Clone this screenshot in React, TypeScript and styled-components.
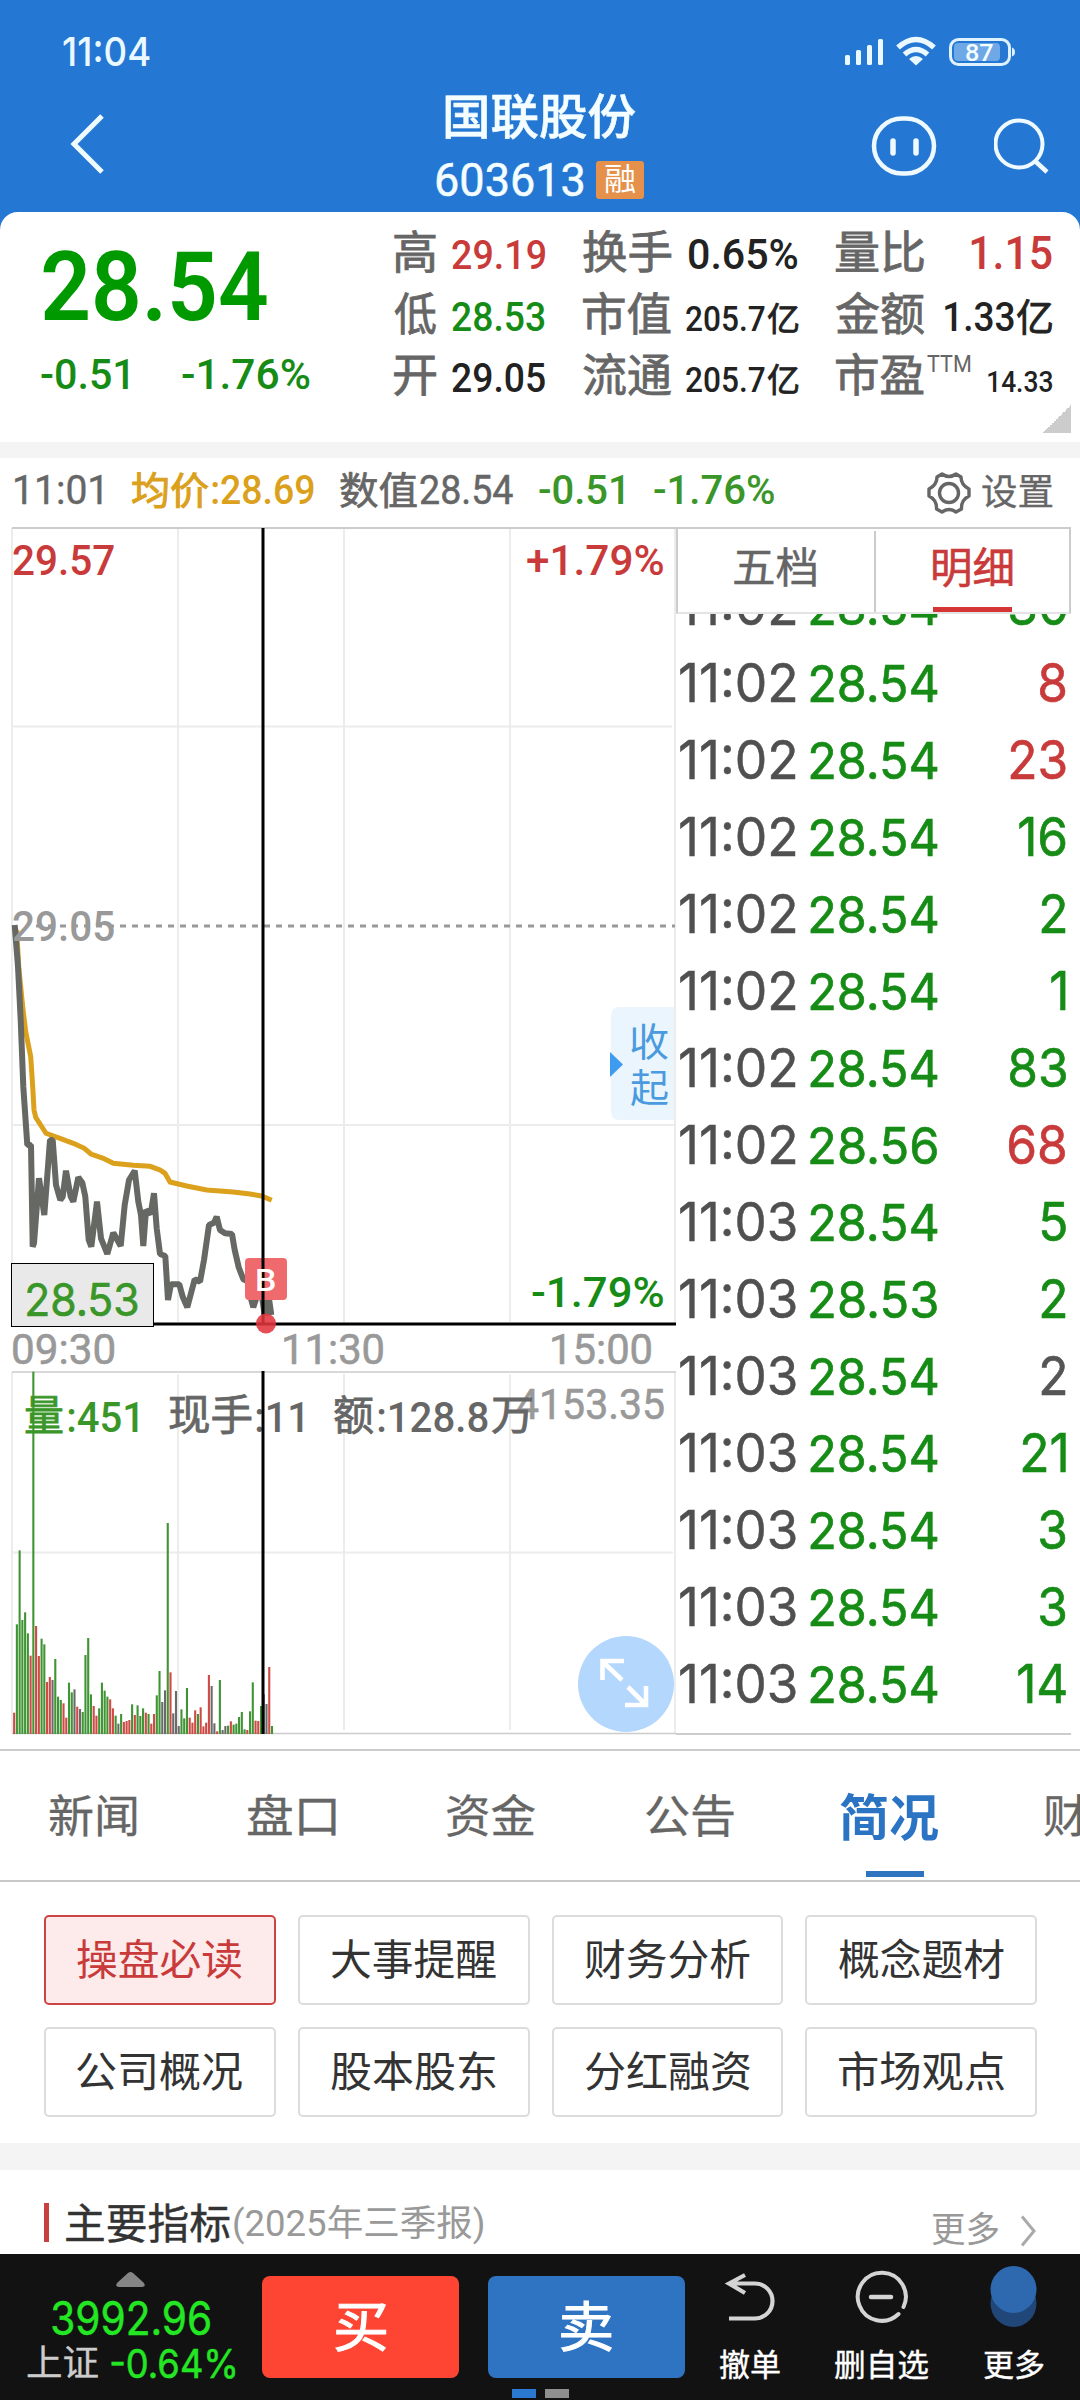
import React from 'react';
import styled, { createGlobalStyle } from 'styled-components';

const SANS = `Roboto, "Noto Sans CJK SC", sans-serif`;
const ROUND = `Inter, "Noto Sans CJK SC", sans-serif`;

const C = {
  blue: '#2577d4',
  green: '#168c16',
  leaf: '#3a9628',
  red: '#c93a3a',
  gold: '#dba01c',
  grey: '#666',
  light: '#999',
  ink: '#222',
};

const Global = createGlobalStyle`
  * { box-sizing: border-box; }
  body { margin: 0; background: #fff; font-family: ${SANS}; }
`;

/* ---------- text whose drawn width is fixed ---------- */

const ctx = document.createElement('canvas').getContext('2d')!;

function measure(text: string, size: number, weight: number, family: string) {
  ctx.font = `${weight} ${size}px ${family}`;
  const m = ctx.measureText(text);
  return { left: m.actualBoundingBoxLeft, width: m.actualBoundingBoxLeft + m.actualBoundingBoxRight };
}

const Slot = styled.span<{ $w: number; $size: number; $lh: number; $weight: number; $family: string; $color?: string; $ml: number; $stroke: number }>`
  display: block;
  flex: none;
  width: ${p => p.$w}px;
  margin-left: ${p => p.$ml}px;
  font-family: ${p => p.$family};
  font-size: ${p => p.$size}px;
  font-weight: ${p => p.$weight};
  line-height: ${p => p.$lh}px;
  color: ${p => p.$color || 'inherit'};
  white-space: nowrap;
  -webkit-text-stroke: ${p => p.$stroke}px currentColor;
`;

const Glyphs = styled.span`
  display: inline-block;
  transform-origin: left center;
`;

interface FitProps {
  t: string; size: number; w?: number; k?: number; weight?: number;
  family?: string; color?: string; lh?: number; ml?: number; stroke?: number;
}

function Fit({ t, size, w, k = 1, weight = 400, family = SANS, color, lh = size, ml = 0, stroke = 0 }: FitProps) {
  const m = measure(t, size, weight, family);
  const width = w ?? m.width * k;
  return (
    <Slot $w={width} $size={size} $lh={lh} $weight={weight} $family={family} $color={color} $ml={ml} $stroke={stroke}>
      <Glyphs style={{ transform: `scaleX(${width / m.width}) translateX(${m.left}px)` }}>{t}</Glyphs>
    </Slot>
  );
}

const SvgText = styled.text<{ $size: number; $weight: number; $family: string }>`
  font-family: ${p => p.$family};
  font-size: ${p => p.$size}px;
  font-weight: ${p => p.$weight};
  white-space: pre;
`;

interface LabelProps {
  t: string; x: number; y: number; w: number; size: number; fill: string; weight?: number; family?: string; stroke?: number;
}

function Label({ t, x, y, w, size, fill, weight = 500, family = SANS, stroke = 0 }: LabelProps) {
  const m = measure(t, size, weight, family);
  const s = w / m.width;
  return (
    <SvgText $size={size} $weight={weight} $family={family} fill={fill} stroke={fill} strokeWidth={stroke}
      transform={`translate(${x + m.left * s} ${y}) scale(${s} 1)`}>{t}</SvgText>
  );
}

/* ---------- header ---------- */

const Screen = styled.div`
  width: 1080px;
  height: 2400px;
  overflow: hidden;
  display: flex;
  flex-direction: column;
  background: ${C.blue};
`;

const StatusBar = styled.div`
  flex: none;
  height: 88px;
  padding: 16px 65px 0 63px;
  display: flex;
  align-items: center;
  justify-content: space-between;
  color: #eaf8ff;
`;

const Nav = styled.div`
  flex: none;
  height: 124px;
  display: flex;
`;

const NavBack = styled.div`
  width: 436px;
  padding: 26px 0 0 70px;
`;

const TitleColumn = styled.div`
  width: 208px;
  display: flex;
  flex-direction: column;
  align-items: center;
  color: #f4fdff;
`;

const CodeRow = styled.div`
  display: flex;
  align-items: center;
  gap: 13px;
  height: 71px;
`;

const MarginBadge = styled.div`
  width: 48px;
  height: 38px;
  border-radius: 3px;
  background: #e5914c;
  display: flex;
  align-items: center;
  justify-content: center;
`;

const NavActions = styled.div`
  flex: 1;
  display: flex;
  gap: 57px;
  padding: 27px 0 0 227px;
`;

function Header() {
  return (
    <>
      <StatusBar>
        <Fit t="11:04" size={40} w={87} weight={500} family={ROUND} />
        <svg width="172" height="32" viewBox="0 0 172 32">
          <g fill="#eaf8ff">
            <rect x="2" y="19" width="5" height="10" rx="1.5" />
            <rect x="13" y="14" width="5" height="15" rx="1.5" />
            <rect x="24" y="9" width="5" height="20" rx="1.5" />
            <rect x="35" y="3" width="5" height="26" rx="1.5" />
          </g>
          <g fill="none" stroke="#eaf8ff" strokeWidth="5.500">
            <path d="M55 11.5 Q73 -4.5 91 11.5" />
            <path d="M61.500 18.500 Q73 8.500 84.500 18.500" />
          </g>
          <path d="M66 23 Q73 17 80 23 L73 29.500 Z" fill="#eaf8ff" />
          <rect x="107.500" y="3.500" width="59" height="25" rx="8" fill="none" stroke="#dff2ff" strokeWidth="3" />
          <rect x="111" y="7" width="46" height="18" rx="4" fill="#6fa8e6" />
          <path d="M169 11.500 q3 1 3 4.500 q0 3.500 -3 4.500 Z" fill="#dff2ff" />
          <Label t="87" x={123} y={24.500} w={27} size={24} fill="#f4fdff" weight={500} />
        </svg>
      </StatusBar>
      <Nav>
        <NavBack>
          <svg width="36" height="60" viewBox="0 0 36 60" fill="none" stroke="#f0fbff" strokeWidth="5">
            <path d="M32 2 L4 30 L32 58" />
          </svg>
        </NavBack>
        <TitleColumn>
          <Fit t="国联股份" size={48} w={190} lh={60} weight={500} stroke={0.6} />
          <CodeRow>
            <Fit t="603613" size={46} w={147} lh={60} stroke={0.5} />
            <MarginBadge>
              <Fit t="融" size={31} w={30} lh={36} color="#fff" />
            </MarginBadge>
          </CodeRow>
        </TitleColumn>
        <NavActions>
          <svg width="66" height="62" viewBox="0 0 66 62" fill="none" stroke="#eefaff">
            <rect x="3" y="3.500" width="60" height="55" rx="28" strokeWidth="4.500" />
            <path d="M22 26 V38 M45 26 V38" strokeWidth="5.500" strokeLinecap="round" />
          </svg>
          <svg width="60" height="62" viewBox="0 0 60 62" fill="none" stroke="#eefaff" strokeWidth="4">
            <circle cx="25" cy="29" r="23.500" />
            <path d="M41 46 L53 57" strokeWidth="4.500" />
          </svg>
        </NavActions>
      </Nav>
    </>
  );
}

/* ---------- quote card ---------- */

const Sheet = styled.main`
  flex: 1;
  min-height: 0;
  display: flex;
  flex-direction: column;
  background: #fff;
  border-radius: 18px 18px 0 0;
`;

const Quote = styled.section`
  flex: none;
  height: 230px;
  display: flex;
  position: relative;
`;

const PriceColumn = styled.div`
  width: 394px;
  padding: 13px 0 0 41px;
`;

const ChangeRow = styled.div`
  display: flex;
  gap: 54px;
  margin-top: 11px;
`;

const StatGrid = styled.div`
  display: grid;
  grid-template-columns: 151px 215px 216px;
  grid-auto-rows: 61.5px;
  column-gap: 38px;
  padding-top: 12px;
`;

const Stat = styled.div`
  display: flex;
  align-items: baseline;
`;

const StatValue = styled.div`
  margin-left: auto;
  display: flex;
  align-items: baseline;
`;

const Superscript = styled.div`
  align-self: flex-start;
  padding: 3px 0 0 3px;
`;

const FoldCorner = styled.div`
  position: absolute;
  right: 9px;
  bottom: 9px;
  width: 28px;
  height: 28px;
  background: linear-gradient(135deg, transparent 50%, #ccc 50%);
`;

const Band = styled.div<{ $h: number }>`
  flex: none;
  height: ${p => p.$h}px;
  background: #f4f4f4;
`;

interface StatData { label: string; lw: number; value: string; vw: number; size: number; color?: string; unit?: string; us?: number; sup?: string }

const stats: StatData[] = [
  { label: '高', lw: 42, value: '29.19', vw: 93, size: 41, color: C.red },
  { label: '换手', lw: 88, value: '0.65%', vw: 109, size: 42, color: C.ink },
  { label: '量比', lw: 88, value: '1.15', vw: 81, size: 46, color: C.red },
  { label: '低', lw: 42, value: '28.53', vw: 93, size: 41, color: C.green },
  { label: '市值', lw: 88, value: '205.7', vw: 79, size: 35, color: C.ink, unit: '亿', us: 33 },
  { label: '金额', lw: 88, value: '1.33', vw: 69, size: 40, color: C.ink, unit: '亿', us: 38 },
  { label: '开', lw: 42, value: '29.05', vw: 93, size: 41, color: C.ink },
  { label: '流通', lw: 88, value: '205.7', vw: 79, size: 35, color: C.ink, unit: '亿', us: 33 },
  { label: '市盈', lw: 88, value: '14.33', vw: 64, size: 29, color: C.ink, sup: 'TTM' },
];

function QuoteCard() {
  return (
    <Quote>
      <PriceColumn>
        <Fit t="28.54" size={96} w={224} ml={2} lh={124} weight={600} color="#009a00" />
        <ChangeRow>
          <Fit t="-0.51" size={42} w={87} lh={30} weight={500} color={C.green} />
          <Fit t="-1.76%" size={42} w={128} lh={30} weight={500} color={C.green} />
        </ChangeRow>
      </PriceColumn>
      <StatGrid>
        {stats.map(s => (
          <Stat key={s.label}>
            <Fit t={s.label} size={45} w={s.lw} lh={60} color={C.grey} stroke={0.8} />
            {s.sup && <Superscript><Fit t={s.sup} size={24} w={43} lh={28} color={C.grey} /></Superscript>}
            <StatValue>
              <Fit t={s.value} size={s.size} w={s.vw} weight={500} color={s.color} />
              {s.unit && <Fit t={s.unit} size={s.us!} lh={40} ml={3} w={s.us! - 3} color={s.color} stroke={0.8} />}
            </StatValue>
          </Stat>
        ))}
      </StatGrid>
      <FoldCorner />
    </Quote>
  );
}

/* ---------- chart ---------- */

const InfoBar = styled.div`
  flex: none;
  height: 69px;
  padding: 0 27px 4px 15px;
  display: flex;
  align-items: center;
  color: ${C.grey};
`;

const Settings = styled.div`
  margin-left: auto;
  display: flex;
  align-items: center;
  gap: 11px;
  padding-top: 4px;
`;

const MarketRow = styled.section`
  flex: none;
  height: 1222px;
  display: flex;
`;

const ChartColumn = styled.div`
  width: 676px;
  display: flex;
  flex-direction: column;
  svg { display: block; overflow: visible; }
`;

const pricePoints = [
  44, 75, 54, 200, 62, 360, 70, 560, 82, 735, 93, 735, 98, 1040, 102, 1030, 117, 835, 133, 945, 150, 720, 158, 720, 168, 855, 181, 900, 188, 890,
  198, 812, 212, 890, 220, 905, 235, 832, 247, 848, 256, 890, 266, 1020, 274, 1040, 291, 905, 303, 1015, 322, 1062, 340, 998, 362, 1038,
  374, 915, 387, 840, 404, 812, 415, 905, 423, 945, 430, 1038, 438, 930, 452, 942, 462, 880, 470, 985, 480, 1062, 496, 1068, 504, 1200,
  513, 1153, 538, 1153, 548, 1190, 562, 1222, 584, 1138, 600, 1145, 612, 1080, 627, 975, 642, 968, 650, 950, 660, 990, 675, 1000, 696, 1002,
  704, 1050, 716, 1102, 730, 1138, 746, 1145, 754, 1200, 760, 1222, 772, 1185, 786, 1190, 794, 1245, 806, 1190, 814, 1245,
];
const averagePoints = [
  50, 90, 56, 200, 68, 320, 77, 395, 92, 470, 98, 560, 102, 630, 107, 652, 138, 700, 180, 715, 220, 730, 253, 745, 273, 762, 310, 775, 340, 790, 400, 796, 450, 799,
  480, 810, 495, 820, 510, 846, 560, 858, 620, 870, 700, 876, 750, 882, 785, 888, 815, 901,
];

const toPath = (pts: number[]) => {
  const out: string[] = [];
  for (let i = 0; i < pts.length; i += 2) out.push(`${(pts[i] / 3).toFixed(1)},${(pts[i + 1] / 3 + 900).toFixed(1)}`);
  return out.join(' ');
};

const volumes =
  'r1058 g793 g571 g780 g757 g820 r887 g35 r798 r888 g836 g853 r966 r951 k960 g897 g1010 g1020 r1030 r1073 g968 g997 k988 r1040 k1047 g1056 g885 g834 g1003 r1038 r1067 g1045 g968 g992 g1010 r1018 r1045 g1067 k1091 g1062 r1086 r1083 r1080 g1033 r1065 g1036 g1068 g1045 r1058 g1062 r1091 r1062 g1006 g933 k1026 k991 g489 r937 k1060 k993 k1098 g1048 g1075 g984 r1073 r1088 r1051 g1062 r1042 r1099 r1088 r945 k978 k1090 r1114 g960 k1110 k1098 g1097 r1084 g1094 g1091 g1071 g1056 g1108 r1110 g1054 g967 r1082 r1083 g1038 k1003 k1032 r921 g1098'
    .split(' ');
const barColor: Record<string, string> = { r: '#cf4a45', g: '#3f9433', k: '#6a6a6a' };

function PriceChart() {
  return (
    <svg width="676" height="844" viewBox="0 527 676 844">
      <g stroke="#ececec" strokeWidth="2">
        <path d="M12 528 V1323 M178 528 V1322 M344 528 V1322 M510 528 V1322 M675 528 V1323" />
        <path d="M12 726.500 H672 M12 1125 H674" />
      </g>
      <path d="M12 528 H676" stroke="#ccc" strokeWidth="2" />
      <path d="M36 926 H675" stroke="#999" strokeWidth="3" strokeDasharray="6 6" />
      <polyline points={toPath(averagePoints)} fill="none" stroke={C.gold} strokeWidth="5" />
      <polyline points={toPath(pricePoints)} fill="none" stroke="#666864" strokeWidth="6" strokeLinejoin="bevel" />
      <path d="M12 1324 H676" stroke="#000" strokeWidth="3" />
      <Label t="29.57" x={13} y={575} w={101} size={43} fill={C.red} />
      <Label t="+1.79%" x={527} y={575} w={136} size={43} fill={C.red} />
      <Label t="29.05" x={13} y={941} w={101} size={43} fill={C.light} />
      <Label t="-1.79%" x={532} y={1307} w={131} size={43} fill={C.green} />
      <rect x="245" y="1258" width="42" height="42" rx="4" fill="#ef6a6c" />
      <path d="M263 528 V1323" stroke="#000" strokeWidth="3" />
      <Label t="B" x={257} y={1291} w={18} size={32} fill="#fff" />
      <circle cx="266" cy="1323.500" r="10" fill="#e0353c" fillOpacity=".88" />
      <rect x="11.500" y="1263.500" width="142" height="63" fill="#e9e9e9" stroke="#000" />
      <Label t="28.53" x={27} y={1316} w={111} size={45} fill={C.leaf} weight={400} stroke={0.6} family={ROUND} />
      <Label t="09:30" x={13} y={1363.500} w={101} size={43} fill={C.light} weight={400} stroke={0.6} />
      <Label t="11:30" x={284} y={1363.500} w={99} size={43} fill={C.light} weight={400} stroke={0.6} />
      <Label t="15:00" x={552} y={1363.500} w={99} size={43} fill={C.light} weight={400} stroke={0.6} />
      <path d="M674 1007 H620 Q611 1007 611 1016 V1111 Q611 1120 620 1120 H674 Z" fill="#eaf5fd" />
      <path d="M610 1052 L623 1064.500 L610 1077 Z" fill="#3f9bef" />
      <Label t="收" x={631} y={1056} w={37} size={39} fill="#4a9ae0" weight={400} />
      <Label t="起" x={631} y={1102} w={37} size={39} fill="#4a9ae0" weight={400} />
    </svg>
  );
}

function VolumeChart() {
  return (
    <svg width="676" height="378" viewBox="0 1371 676 378">
      <g stroke="#ececec" strokeWidth="2">
        <path d="M12 1372 V1733 M178 1374 V1730 M344 1374 V1730 M510 1374 V1730 M675 1372 V1733" />
        <path d="M12 1552.500 H673" />
      </g>
      <path d="M12 1372 H676 M12 1733.500 H676" stroke="#ccc" strokeWidth="1.600" />
      {volumes.map((v, i) => {
        const top = Number(v.slice(1)) / 3 + 1360;
        return <rect key={i} x={13.1 + i * 2.743} y={top} width="2.100" height={1734 - top} fill={barColor[v[0]]} />;
      })}
      <Label t="4153.35" x={517} y={1419} w={147} size={43} fill={C.light} weight={400} stroke={0.6} />
      <Label t="量" x={25} y={1430} w={38} size={41} fill={C.leaf} weight={400} stroke={0.8} />
      <Label t=":451" x={68} y={1432} w={70} size={43} fill={C.leaf} />
      <Label t="现手" x={169} y={1430} w={83} size={42} fill={C.grey} weight={400} stroke={0.8} />
      <Label t=":11" x={256} y={1432} w={47} size={43} fill={C.grey} />
      <Label t="额" x={334} y={1430} w={39} size={41} fill={C.grey} weight={400} stroke={0.8} />
      <Label t=":128.8" x={378} y={1432} w={110} size={43} fill={C.grey} />
      <Label t="万" x={492} y={1430} w={40} size={41} fill={C.grey} weight={400} stroke={0.8} />
      <path d="M263 1371 V1734" stroke="#000" strokeWidth="3" />
      <circle cx="626" cy="1684" r="48" fill="#b3d7fd" />
      <path d="M624 1661 H602.500 V1680 M603 1662 L622 1680 M625 1705 H646 V1686 M646 1705 L628 1687"
        fill="none" stroke="#fff" strokeWidth="4.600" />
    </svg>
  );
}

/* ---------- tick list ---------- */

const TickColumn = styled.div`
  width: 395px;
  height: 1208px;
  display: flex;
  flex-direction: column;
  border-bottom: 2px solid #ccc;
`;

const TickTabs = styled.div`
  flex: none;
  height: 87px;
  display: flex;
  align-items: stretch;
  border: 2px solid #ccc;
  border-bottom-color: #e4e4e4;
  padding: 2px 0 0;
`;

const TickTab = styled.div<{ $on?: boolean }>`
  flex: 1;
  display: flex;
  flex-direction: column;
  align-items: center;
  justify-content: space-between;
  padding-right: ${p => (p.$on ? 0 : 3)}px;
  color: ${p => (p.$on ? C.red : C.grey)};
  border-left: ${p => (p.$on ? '2px solid #ccc' : '0')};
  &::after {
    content: '';
    width: 79px;
    height: 6px;
    background: ${p => (p.$on ? '#d53535' : 'transparent')};
  }
`;

const TickList = styled.div`
  flex: 1;
  min-height: 0;
  overflow: hidden;
  display: flex;
  flex-direction: column;
  justify-content: flex-end;
  padding-bottom: 11px;
`;

const Tick = styled.div`
  flex: none;
  height: 77px;
  display: flex;
  align-items: baseline;
  padding: 0 5px 0 4px;
`;

const TickVolume = styled.div`
  margin-left: auto;
`;

const ticks: [string, string, string, string][] = [
  ['11:02', '28.54', '30', C.green],
  ['11:02', '28.54', '8', C.red],
  ['11:02', '28.54', '23', C.red],
  ['11:02', '28.54', '16', C.green],
  ['11:02', '28.54', '2', C.green],
  ['11:02', '28.54', '1', C.green],
  ['11:02', '28.54', '83', C.green],
  ['11:02', '28.56', '68', C.red],
  ['11:03', '28.54', '5', C.green],
  ['11:03', '28.53', '2', C.green],
  ['11:03', '28.54', '2', '#555'],
  ['11:03', '28.54', '21', C.green],
  ['11:03', '28.54', '3', C.green],
  ['11:03', '28.54', '3', C.green],
  ['11:03', '28.54', '14', C.green],
];

function Ticks() {
  return (
    <TickColumn>
      <TickTabs>
        <TickTab><Fit t="五档" size={42} w={82} lh={76} stroke={0.4} /></TickTab>
        <TickTab $on><Fit t="明细" size={42} w={80} lh={76} stroke={0.6} /></TickTab>
      </TickTabs>
      <TickList>
        {ticks.map(([time, price, vol, color], i) => (
          <Tick key={i}>
            <Fit t={time} size={54} w={116} lh={77} family={ROUND} stroke={0.5} color="#505050" />
            <Fit t={price} size={51} w={127} ml={14} family={ROUND} stroke={0.6} color={C.green} />
            <TickVolume><Fit t={vol} size={54} k={0.92} family={ROUND} stroke={0.6} color={color} /></TickVolume>
          </Tick>
        ))}
      </TickList>
    </TickColumn>
  );
}

/* ---------- profile section ---------- */

const TabBar = styled.nav`
  flex: none;
  height: 133px;
  border-top: 2px solid #ccc;
  border-bottom: 2px solid #c8c8c8;
  display: flex;
  overflow: hidden;
  padding-left: 49px;
`;

const Tab = styled.div`
  flex: none;
  width: 199px;
  padding-top: 34px;
  color: ${C.grey};
`;

const ActiveTab = styled(Tab)`
  width: 204px;
  margin-left: -5px;
  color: #2b74c4;
  &::after {
    content: '';
    display: block;
    width: 58px;
    height: 6px;
    margin: 18px 0 0 26px;
    background: #2f74bf;
  }
`;

const ButtonGrid = styled.div`
  flex: none;
  display: grid;
  grid-template-columns: repeat(4, 1fr);
  grid-auto-rows: 90px;
  gap: 22px;
  padding: 33px 43px 26px 44px;
`;

const Chip = styled.button<{ $on?: boolean }>`
  display: flex;
  align-items: center;
  justify-content: center;
  padding: 1px 0 0;
  border: 2px solid ${p => (p.$on ? '#cc4444' : '#dcdcdc')};
  border-radius: 5px;
  background: ${p => (p.$on ? '#fdeaea' : '#fff')};
  color: ${p => (p.$on ? C.red : '#333')};
`;

const SectionHead = styled.div`
  flex: 1;
  min-height: 0;
  display: flex;
  align-items: flex-start;
  padding: 28px 44px 0;
`;

const Marker = styled.i`
  width: 5px;
  height: 39px;
  margin: 5px 17px 0 0;
  background: #c94040;
`;

const More = styled.div`
  margin-left: auto;
  display: flex;
  align-items: center;
  gap: 21px;
  padding-top: 8px;
`;

/* ---------- trade bar ---------- */

const TradeBar = styled.footer`
  flex: none;
  height: 146px;
  display: flex;
  position: relative;
  background: #121212;
`;

const IndexBlock = styled.div`
  width: 262px;
  padding: 18px 0 0 27px;
`;

const IndexRow = styled.div`
  display: flex;
  align-items: center;
`;

const TradeButton = styled.button<{ $bg: string }>`
  width: 197px;
  height: 102px;
  margin: 22px 29px 0 0;
  padding: 3px 0 0;
  border: 0;
  border-radius: 8px;
  background: ${p => p.$bg};
  color: #fff;
  display: flex;
  align-items: center;
  justify-content: center;
`;

const Tool = styled.div<{ $w: number; $ml: number }>`
  width: ${p => p.$w}px;
  margin-left: ${p => p.$ml}px;
  padding-top: 10px;
  display: flex;
  flex-direction: column;
  align-items: center;
  color: #fff;
  svg { display: block; margin-bottom: 18px; }
`;

const Pager = styled.div`
  position: absolute;
  left: 512px;
  bottom: 2px;
  display: flex;
  gap: 9px;
`;

const PagerMark = styled.i<{ $on?: boolean }>`
  width: 24px;
  height: 9px;
  background: ${p => (p.$on ? '#2b78d0' : '#8f8f8f')};
`;

const chips = ['操盘必读', '大事提醒', '财务分析', '概念题材', '公司概况', '股本股东', '分红融资', '市场观点'];

export default function App() {
  return (
    <Screen>
      <Global />
      <Header />
      <Sheet>
        <QuoteCard />
        <Band $h={16} />
        <InfoBar>
          <Fit t="11:01" size={40} w={87} stroke={0.4} />
          <Fit t="均价" size={38} w={76} lh={46} ml={30} color={C.gold} stroke={1} />
          <Fit t=":28.69" size={40} w={102} ml={4} weight={500} color={C.gold} />
          <Fit t="数值" size={38} w={77} lh={46} ml={26} stroke={0.7} />
          <Fit t="28.54" size={40} w={93} ml={3} stroke={0.5} />
          <Fit t="-0.51" size={40} w={84} ml={26} weight={500} color={C.leaf} />
          <Fit t="-1.76%" size={40} w={120} ml={31} weight={500} color={C.leaf} />
          <Settings>
            <svg width="44" height="44" viewBox="0 0 44 44" fill="none" stroke="#666" strokeWidth="3.400" strokeLinejoin="round">
              <circle cx="22" cy="22" r="9.500" />
              <path d="M15 3 Q22 8 29 3 L34 6 Q34 14 42 18 V25 Q34 29 34.500 38 L29 41 Q22 36 15 41 L9.500 38 Q10 29 2 25 V18 Q10 14 10 6 Z" />
            </svg>
            <Fit t="设置" size={36} w={71} lh={44} stroke={0.3} />
          </Settings>
        </InfoBar>
        <MarketRow>
          <ChartColumn>
            <PriceChart />
            <VolumeChart />
          </ChartColumn>
          <Ticks />
        </MarketRow>
        <TabBar>
          {['新闻', '盘口', '资金', '公告'].map(t => (
            <Tab key={t}><Fit t={t} size={45} w={88} lh={66} stroke={0.3} /></Tab>
          ))}
          <ActiveTab><Fit t="简况" size={50} w={98} lh={68} weight={700} /></ActiveTab>
          <Tab><Fit t="财" size={45} w={42} lh={66} stroke={0.3} /></Tab>
        </TabBar>
        <ButtonGrid>
          {chips.map((t, i) => (
            <Chip key={t} $on={i === 0}><Fit t={t} size={42} w={165} lh={60} /></Chip>
          ))}
        </ButtonGrid>
        <Band $h={27} />
        <SectionHead>
          <Marker />
          <Fit t="主要指标" size={42} w={164} lh={54} color="#333" stroke={0.4} />
          <Fit t="(2025年三季报)" size={36} w={249} lh={52} ml={4} color={C.light} />
          <More>
            <Fit t="更多" size={35} w={67} lh={50} color={C.light} />
            <svg width="16" height="32" viewBox="0 0 16 32" fill="none" stroke="#aaa" strokeWidth="3">
              <path d="M2 1.500 L14 16 L2 30.500" />
            </svg>
          </More>
        </SectionHead>
      </Sheet>
      <TradeBar>
        <IndexBlock>
          <svg width="206" height="15" viewBox="0 0 206 15"><path d="M101 1 Q103.500 -1 106 1 L117 11 Q119 15 115 15 H92 Q88 15 90 11 Z" fill="#858585" /></svg>
          <Fit t="3992.96" size={46} w={158} lh={54} ml={25} stroke={0.5} family={ROUND} color="#24e724" />
          <IndexRow>
            <Fit t="上证" size={36} w={71} lh={38} color="#ccc" stroke={0.3} />
            <Fit t="-0.64%" size={39} w={124} lh={38} ml={13} stroke={0.5} family={ROUND} color="#24e724" />
          </IndexRow>
        </IndexBlock>
        <TradeButton $bg="#fe4432"><Fit t="买" size={54} w={51} lh={70} stroke={1} /></TradeButton>
        <TradeButton $bg="#2f74c3"><Fit t="卖" size={54} w={51} lh={70} stroke={1} /></TradeButton>
        <Tool $w={62} $ml={5}>
          <svg width="62" height="64" viewBox="0 0 62 64" fill="none" stroke="#d4d4d4" strokeWidth="4.200">
            <path d="M10 19.500 H36 A17.500 17.500 0 0 1 36 54.500 H10 M26 11 L10 19.500 L26 29" />
          </svg>
          <Fit t="撤单" size={31} w={60} lh={40} stroke={0.4} />
        </Tool>
        <Tool $w={94} $ml={53}>
          <svg width="62" height="64" viewBox="0 0 62 64" fill="none" stroke="#d4d4d4" strokeWidth="4" strokeLinecap="round">
            <path d="M53.500 43 A24 24 0 1 0 48.500 50" />
            <path d="M21 33 H41" strokeWidth="4.500" />
          </svg>
          <Fit t="删自选" size={31} w={93} lh={40} stroke={0.4} />
        </Tool>
        <Tool $w={62} $ml={55}>
          <svg width="62" height="64" viewBox="0 0 62 64">
            <ellipse cx="30.500" cy="39.500" rx="23" ry="23.500" fill="#214678" />
            <ellipse cx="30.500" cy="25.500" rx="23" ry="23.500" fill="#2e69b0" />
          </svg>
          <Fit t="更多" size={31} w={60} lh={40} stroke={0.4} />
        </Tool>
        <Pager><PagerMark $on /><PagerMark /></Pager>
      </TradeBar>
    </Screen>
  );
}
